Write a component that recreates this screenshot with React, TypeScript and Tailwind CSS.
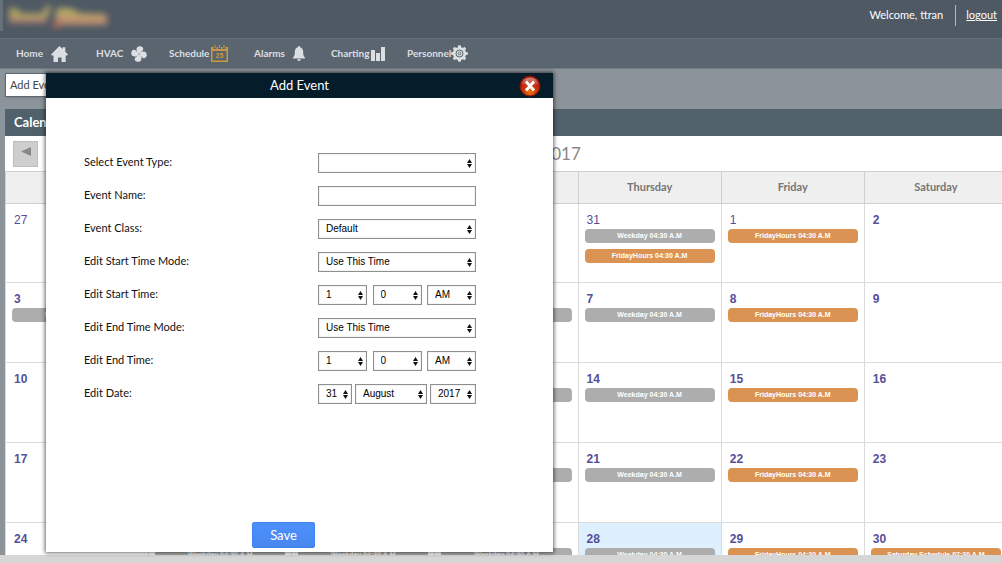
import React from "react";

type EventKind = "weekday" | "friday" | "saturday";
type Day = { n: number; light?: boolean; today?: boolean; events: EventKind[] };

const LABELS: Record<EventKind, string> = {
  weekday: "Weekday 04:30 A.M",
  friday: "FridayHours 04:30 A.M",
  saturday: "Saturday Schedule 07:30 A.M",
};

const DAY_NAMES = ["Sunday", "Monday", "Tuesday", "Wednesday", "Thursday", "Friday", "Saturday"];

const week = (start: number): Day[] => [
  { n: start, events: start === 3 ? ["weekday"] : [] },
  { n: start + 1, events: ["weekday"] },
  { n: start + 2, events: ["weekday"] },
  { n: start + 3, events: ["weekday"] },
  { n: start + 4, today: start === 24, events: ["weekday"] },
  { n: start + 5, events: ["friday"] },
  { n: start + 6, events: start === 24 ? ["saturday"] : [] },
];

const WEEKS: Day[][] = [
  [
    { n: 27, light: true, events: [] },
    { n: 28, light: true, events: [] },
    { n: 29, light: true, events: [] },
    { n: 30, light: true, events: [] },
    { n: 31, light: true, events: ["weekday", "friday"] },
    { n: 1, light: true, events: ["friday"] },
    { n: 2, events: [] },
  ],
  week(3),
  week(10),
  week(17),
  week(24),
];

function HomeIcon() {
  return (
    <svg width="17" height="16" viewBox="0 0 17 16" fill="#dcdfe1" aria-hidden="true">
      <path d="M8.500 0 11.500 3V1.200h2.800v4.600L17 8.500l-1 1h-1.300V16h-4.200v-4.500H7V16H2.500V9.500H1l-1-1z" />
    </svg>
  );
}

function FanIcon() {
  return (
    <svg width="16" height="16" viewBox="-8 -8 16 16" aria-hidden="true">
      <g fill="#dcdfe1">
        {[15, 105, 195, 285].map((a) => (
          <path
            key={a}
            transform={`rotate(${a})`}
            d="M-.8 0C-3-1.500-4-3.400-3.600-5.400-3.200-7.300-1.500-8 .3-7.800 2.300-7.600 3.200-6.300 2.800-4.900 2.500-3.600 1.200-3 .9-1z"
          />
        ))}
        <circle r="1.800" />
      </g>
      <circle r=".8" fill="#7c8690" />
    </svg>
  );
}

function ScheduleIcon() {
  return (
    <svg width="17" height="17" viewBox="0 0 17 17" aria-hidden="true">
      <path
        fill="#c9983f"
        fillRule="evenodd"
        d="M0 2h2.500v2h3V2h1.500v2h3V2h1.500v2h3V2H17v15H0zM1.500 6v9.500h14V6z"
      />
      <path fill="#c9983f" d="M3.500 0h1v3h-1zM8 0h1v3H8zM12.500 0h1v3h-1z" />
      <text x="8.500" y="13" textAnchor="middle" fontSize="7" fontWeight="700" fill="#c9983f" fontFamily="Liberation Sans, sans-serif">
        25
      </text>
    </svg>
  );
}

function BellIcon() {
  return (
    <svg width="12" height="15" viewBox="0 0 12 15" fill="#dcdfe1" aria-hidden="true">
      <path d="M6 0c.7 0 1 .5 1 1.200C9.300 1.700 10.200 3.500 10.200 6c0 3 .4 4.400 1.800 5.500v.9H0v-.9C1.400 10.400 1.800 9 1.800 6c0-2.500.9-4.300 3.200-4.800C5 .5 5.300 0 6 0z" />
      <path d="M4.300 13.200h3.400C7.600 14.300 7 15 6 15s-1.600-.7-1.700-1.800z" />
    </svg>
  );
}

function ChartIcon() {
  return (
    <svg width="14" height="14" viewBox="0 0 14 14" fill="#dcdfe1" aria-hidden="true">
      <path d="M0 3h4v11H0zM5 6h4v8H5zM10 0h4v14h-4z" />
    </svg>
  );
}

function GearIcon() {
  return (
    <svg width="17" height="17" viewBox="-8.500 -8.500 17 17" aria-hidden="true">
      <g fill="#dcdfe1">
        {[0, 45, 90, 135].map((a) => (
          <rect key={a} x="-1.500" y="-8.300" width="3" height="16.600" rx=".8" transform={`rotate(${a})`} />
        ))}
        <circle r="6.600" />
      </g>
      <circle r="3.500" fill="none" stroke="#56616c" strokeWidth="1" />
      <circle r="1.300" fill="none" stroke="#56616c" strokeWidth=".9" />
    </svg>
  );
}

function CloseIcon() {
  return (
    <svg width="22" height="22" viewBox="0 0 22 22" aria-hidden="true">
      <defs>
        <radialGradient id="closeFill" cx=".5" cy=".8" r=".75">
          <stop offset="0" stopColor="#e8770f" />
          <stop offset=".5" stopColor="#c9300c" />
          <stop offset="1" stopColor="#a01208" />
        </radialGradient>
        <linearGradient id="closeShine" x1="0" y1="0" x2="0" y2="1">
          <stop offset="0" stopColor="#fff" stopOpacity=".5" />
          <stop offset="1" stopColor="#fff" stopOpacity=".05" />
        </linearGradient>
      </defs>
      <circle cx="11" cy="11" r="10" fill="url(#closeFill)" stroke="#8e1206" strokeWidth="1" />
      <path d="M2.500 9a8.800 8.800 0 0 1 17 0c-5 2.500-12 2.500-17 0z" fill="url(#closeShine)" />
      <path d="m7 6.500 8 9M15 6.500l-8 9" stroke="#fff" strokeWidth="2.800" />
    </svg>
  );
}

function Logo() {
  return (
    <svg width="120" height="32" viewBox="0 0 120 32" role="img" aria-label="Logo">
      <defs>
        <filter id="soft" x="-20%" y="-60%" width="140%" height="220%">
          <feGaussianBlur stdDeviation="3" />
        </filter>
      </defs>
      <path d="M0 0h3v31H0z" fill="#78828b" opacity=".6" />
      <g filter="url(#soft)" opacity=".9">
        <path d="M9 16h37v7H9z" fill="#b98573" />
        <path d="M9 8h7l6 5h20l5-8h4l-3 13H9z" fill="#b5a663" />
        <path d="M54 14h53v11H58z" fill="#c8946f" />
        <path d="M57 8h14l9 5 24 1v3H56z" fill="#c2ae66" />
        <path d="M52 22h9v6h-9z" fill="#b5685f" />
      </g>
    </svg>
  );
}

const NAV = [
  { label: "Home", icon: <HomeIcon />, cell: "w-20", gap: "gap-2" },
  { label: "HVAC", icon: <FanIcon />, cell: "w-[73px]", gap: "gap-2" },
  { label: "Schedule", icon: <ScheduleIcon />, cell: "w-[85px]", gap: "gap-0.5" },
  { label: "Alarms", icon: <BellIcon />, cell: "w-[77px]", gap: "gap-2" },
  { label: "Charting", icon: <ChartIcon />, cell: "w-[76px]", gap: "gap-0.5" },
  { label: "Personnel", icon: <GearIcon />, cell: "w-20", gap: "gap-0" },
];

function Select({ id, label, width, options }: { id: string; label?: string; width: string; options: string[] }) {
  return (
    <span className={`relative inline-flex ${width}`}>
      <select
        id={id}
        aria-label={label}
        className="h-5 w-full appearance-none border border-[#8f8f8f] bg-white pl-[7px] font-['Liberation_Sans',Arial,sans-serif] text-[10px] leading-4 text-black shadow-[inset_0_0_1px_#8f8f8f]"
      >
        {options.map((o) => (
          <option key={o}>{o}</option>
        ))}
      </select>
      <svg className="pointer-events-none absolute top-1.5 right-1" width="5" height="9" viewBox="0 0 5 9" aria-hidden="true">
        <path d="M2.500 0 5 4H0zM0 5h5L2.500 9z" fill="#111" />
      </svg>
    </span>
  );
}

function Row({ id, label, children }: { id: string; label: string; children: React.ReactNode }) {
  return (
    <div className="flex h-[33px] items-center">
      <label htmlFor={id} className="w-[234px] text-[11px] text-[#111]">
        {label}
      </label>
      <div className="flex w-[158px] justify-between">{children}</div>
    </div>
  );
}

function AddEventDialog() {
  return (
    <form
      role="dialog"
      aria-labelledby="dialog-title"
      className="absolute top-[73px] left-[46px] z-10 flex h-[479px] w-[507px] flex-col bg-white shadow-[0_0_4px_1px_rgba(0,0,0,0.6)]"
      onSubmit={(e) => e.preventDefault()}
    >
      <header className="grid h-[25px] shrink-0 grid-cols-[1fr_auto_1fr] items-center bg-[#051c2b] pr-3 pl-3">
        <span />
        <h2 id="dialog-title" className="text-[13px] text-white">
          Add Event
        </h2>
        <button type="button" aria-label="Close" className="justify-self-end">
          <CloseIcon />
        </button>
      </header>
      <div className="flex-1 px-[38px] pt-12">
        <Row id="type" label="Select Event Type:">
          <Select id="type" width="w-full" options={[""]} />
        </Row>
        <Row id="name" label="Event Name:">
          <input
            id="name"
            type="text"
            className="h-5 w-full border border-[#8f8f8f] bg-white px-1.5 text-[10px] shadow-[inset_0_0_1px_#8f8f8f]"
          />
        </Row>
        <Row id="class" label="Event Class:">
          <Select id="class" width="w-full" options={["Default"]} />
        </Row>
        <Row id="start-mode" label="Edit Start Time Mode:">
          <Select id="start-mode" width="w-full" options={["Use This Time"]} />
        </Row>
        <Row id="start" label="Edit Start Time:">
          <Select id="start" width="w-[49px]" options={["1"]} />
          <Select id="start-min" label="Start minute" width="w-[49px]" options={["0"]} />
          <Select id="start-half" label="Start AM or PM" width="w-[49px]" options={["AM", "PM"]} />
        </Row>
        <Row id="end-mode" label="Edit End Time Mode:">
          <Select id="end-mode" width="w-full" options={["Use This Time"]} />
        </Row>
        <Row id="end" label="Edit End Time:">
          <Select id="end" width="w-[49px]" options={["1"]} />
          <Select id="end-min" label="End minute" width="w-[49px]" options={["0"]} />
          <Select id="end-half" label="End AM or PM" width="w-[49px]" options={["AM", "PM"]} />
        </Row>
        <Row id="day" label="Edit Date:">
          <Select id="day" width="w-[34px]" options={["31"]} />
          <Select id="month" label="Month" width="w-[72px]" options={["August"]} />
          <Select id="year" label="Year" width="w-[46px]" options={["2017"]} />
        </Row>
      </div>
      <footer className="flex justify-center pr-8 pb-1">
        <button
          type="submit"
          className="h-[26px] w-[63px] rounded-xs border border-[#3f83ee] bg-linear-to-b from-[#4d90fe] to-[#4787ed] text-[13px] leading-5 text-white"
        >
          Save
        </button>
      </footer>
    </form>
  );
}

function EventPill({ kind }: { kind: EventKind }) {
  const color = kind === "weekday" ? "bg-[#adadad]" : "bg-[#db9353]";
  return (
    <a
      href="#event"
      className={`mb-1.5 block h-3.5 rounded-[4px] text-center font-['Liberation_Sans',Arial,sans-serif] text-[7px] leading-[14px] font-bold whitespace-nowrap text-white ${color}`}
    >
      {LABELS[kind]}
    </a>
  );
}

export default function App() {
  return (
    <div className="relative flex h-screen flex-col overflow-hidden bg-[#8c949b] font-['Lato',sans-serif]">
      <header className="flex h-[38px] shrink-0 items-start justify-between bg-[#4e5964] pr-[5px]">
        <Logo />
        <div className="flex items-center pt-[5px] text-[11px] text-white">
          <span>Welcome, ttran</span>
          <span className="mr-2.5 ml-3 h-[21px] w-px bg-[#b9b5b2]" />
          <a href="#logout" className="underline">
            logout
          </a>
        </div>
      </header>
      <nav className="flex h-[31px] shrink-0 items-center border-y border-t-[#626d78] border-b-[#6f7a83] bg-[#5a6570] pl-4">
        {NAV.map((item) => (
          <a key={item.label} href={`#${item.label}`} className={`flex items-center text-[10px] font-bold text-[#dcdfe1] ${item.cell} ${item.gap}`}>
            {item.label}
            {item.icon}
          </a>
        ))}
      </nav>
      <main className="flex min-h-0 flex-1 flex-col overflow-hidden pt-1 pl-[5px]">
        <button type="button" className="h-6 w-20 shrink-0 border border-[#5f676e] bg-white px-1 text-left text-[11px] text-[#444] shadow-sm">
          Add Event
        </button>
        <h1 className="mt-3 h-[27px] shrink-0 bg-[#51616b] px-[9px] text-[13px] leading-[27px] font-bold text-white">Calendar</h1>
        <section className="-mr-1.5 bg-white">
          <div className="grid h-[35px] grid-cols-[1fr_auto_1fr] items-center px-2">
            <button type="button" aria-label="Previous month" className="flex h-[26px] w-[25px] items-center justify-center border border-[#bdbdbd] bg-[#cecece] pb-1">
              <svg width="10" height="9" viewBox="0 0 10 9" aria-hidden="true">
                <path d="M0 4.500 10 0v9z" fill="#888" />
              </svg>
            </button>
            <h2 className="pl-6 text-[17px] text-[#888]">September 2017</h2>
            <span />
          </div>
          <table className="w-full table-fixed border-collapse">
            <thead>
              <tr className="h-8 bg-[#efefef]">
                {DAY_NAMES.map((d) => (
                  <th key={d} className="border border-[#cfcfcf] p-0 text-[11px] font-bold text-[#757575]">
                    {d}
                  </th>
                ))}
              </tr>
            </thead>
            <tbody>
              {WEEKS.map((days, i) => (
                <tr key={i} className={i === 0 ? "h-[79px]" : "h-20"}>
                  {days.map((day) => (
                    <td key={day.n} className={`border border-[#dadada] px-1.5 pt-[7px] pb-0 align-top ${day.today ? "bg-[#def0fe]" : ""}`}>
                      <div
                        className={`px-0.5 font-['Liberation_Sans',Arial,sans-serif] text-[12px] leading-[18px] text-[#554f99] ${day.light ? "" : "font-bold"}`}
                      >
                        {day.n}
                      </div>
                      {day.events.map((kind) => (
                        <EventPill key={kind} kind={kind} />
                      ))}
                    </td>
                  ))}
                </tr>
              ))}
            </tbody>
          </table>
        </section>
      </main>
      <div className="h-2 shrink-0 bg-[#d6d6d6]" />
      <AddEventDialog />
    </div>
  );
}
